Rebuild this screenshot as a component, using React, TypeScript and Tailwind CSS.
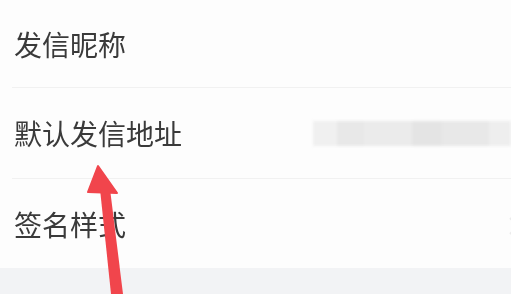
const font = { fontFamily: '"Noto Sans CJK SC", "Noto Sans", sans-serif' };

function Divider() {
  return <div className="ml-[12px] h-px bg-[#f1f1f1]" />;
}

function BlurredValue() {
  return (
    <div className="flex h-[25px] w-[198px] blur-[1.5px]">
      <div className="w-[24px] bg-[#f0f0f0]" />
      <div className="w-[27px] bg-[#e8e8e8]" />
      <div className="w-[48px] bg-[#ebebeb]" />
      <div className="w-[30px] bg-[#e4e4e4]" />
      <div className="w-[47px] bg-[#e8e8e8]" />
      <div className="w-[22px] bg-[#eeeeee]" />
    </div>
  );
}

function Arrow() {
  return (
    <svg
      className="pointer-events-none absolute left-0 top-0"
      width="511"
      height="294"
      viewBox="0 0 511 294"
    >
      <polygon points="98,166 88,192 117,193" fill="#f1454c" strokeLinejoin="round" stroke="#f1454c" strokeWidth="2" />
      <polygon points="100,189 110,189 123,294 111,294" fill="#f1454c" />
    </svg>
  );
}

export default function App() {
  return (
    <div
      className="relative flex h-[294px] w-[511px] flex-col overflow-hidden bg-[#f2f3f5] text-[28px] leading-none text-[#3a3a3a]"
      style={font}
    >
      <div className="flex flex-col bg-[#fdfdfd]">
        <div className="flex h-[87px] items-center px-[14px] blur-[0.4px]">发信昵称</div>
        <Divider />
        <div className="flex h-[90px] items-center justify-between pl-[14px]">
          <span className="blur-[0.4px]">默认发信地址</span>
          <BlurredValue />
        </div>
        <Divider />
        <div className="flex h-[89px] items-center justify-between pl-[14px]">
          <span className="blur-[0.4px]">签名样式</span>
          <svg className="-mr-[9px] mt-[4px] blur-[0.5px]" width="12" height="20" viewBox="0 0 12 20">
            <path d="M2 2 L10 10 L2 18" fill="none" stroke="#ebebeb" strokeWidth="2" />
          </svg>
        </div>
      </div>
      <Arrow />
    </div>
  );
}
